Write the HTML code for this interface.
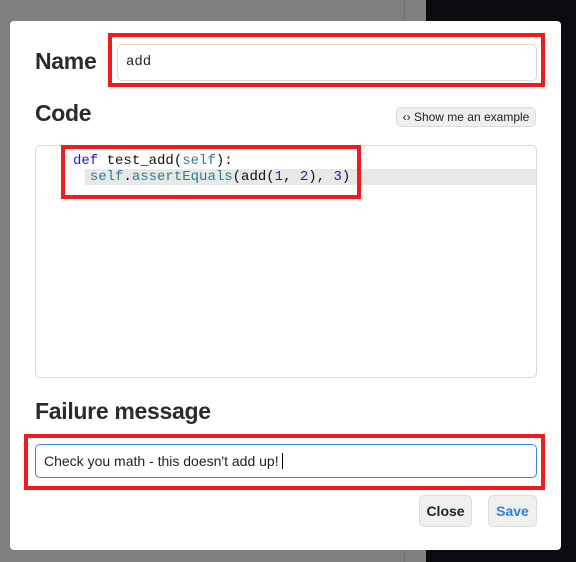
<!DOCTYPE html>
<html><head><style>
body{margin:0;width:576px;height:562px;position:relative;overflow:hidden;background:#808080;font-family:"Liberation Sans",sans-serif;}
.dark{position:absolute;left:426px;top:0;width:150px;height:562px;background:#0b0c10}
.line{position:absolute;left:404px;top:0;width:1px;height:562px;background:#6e6e6e}
.modal{position:absolute;left:10px;top:21px;width:551px;height:529px;background:#fff;border-radius:4px}
.abs{position:absolute}
h{position:absolute;font-size:23px;color:#2b2b2b;font-weight:bold;letter-spacing:-0.3px}
.red{position:absolute;border:4px solid #ee1c1c;box-sizing:border-box}
.inp{position:absolute;border:1px solid #d8d8d8;border-radius:5px;box-sizing:border-box;background:#fff}
.mono{font-family:"Liberation Mono",monospace;font-size:14px}
.btn{position:absolute;background:#efefef;border:1px solid #dcdcdc;border-radius:5px;box-sizing:border-box;font-size:14px;font-weight:bold;text-align:center}
</style></head><body>
<div class="line"></div><div class="dark"></div>
<div class="modal"></div>
<h style="left:35px;top:48px">Name</h>
<div class="inp" style="left:117px;top:44px;width:420px;height:37px"></div>
<div class="abs mono" style="left:126px;top:54px;color:#222">add</div>
<div class="red" style="left:108px;top:33px;width:437px;height:54px"></div>
<h style="left:35px;top:100px">Code</h>
<div class="btn" style="left:396px;top:107px;width:140px;height:20px;font-size:12px;font-weight:normal;line-height:18px;color:#222">&lsaquo;&rsaquo; Show me an example</div>
<div class="inp" style="left:35px;top:145px;width:502px;height:233px"></div>
<div class="abs" style="left:85px;top:169px;width:451px;height:16px;background:#e8e8e8"></div>
<div class="abs mono" style="left:73px;top:153px;line-height:16px;color:#111;white-space:pre"><span style="color:#1a1adf">def</span> test_add(<span style="color:#2a7f8f">self</span>):
  <span style="color:#2a7f8f">self</span>.<span style="color:#2a7f8f">assertEquals</span>(add(<span style="color:#1a1ac0">1</span>, <span style="color:#1a1ac0">2</span>), <span style="color:#1a1ac0">3</span>)</div>
<div class="red" style="left:61px;top:145px;width:300px;height:54px"></div>
<h style="left:35px;top:398px">Failure message</h>
<div class="inp" style="left:35px;top:444px;width:502px;height:34px;border-color:#3d84d8"></div>
<div class="abs" style="left:44px;top:453px;font-size:14px;color:#222">Check you math - this doesn't add up!<span style="border-left:1px solid #000;margin-left:3px"></span></div>
<div class="red" style="left:24px;top:434px;width:521px;height:56px"></div>
<div class="btn" style="left:419px;top:495px;width:53px;height:32px;line-height:30px;color:#222">Close</div>
<div class="btn" style="left:488px;top:495px;width:49px;height:32px;line-height:30px;color:#2f7fdc">Save</div>
</body></html>
